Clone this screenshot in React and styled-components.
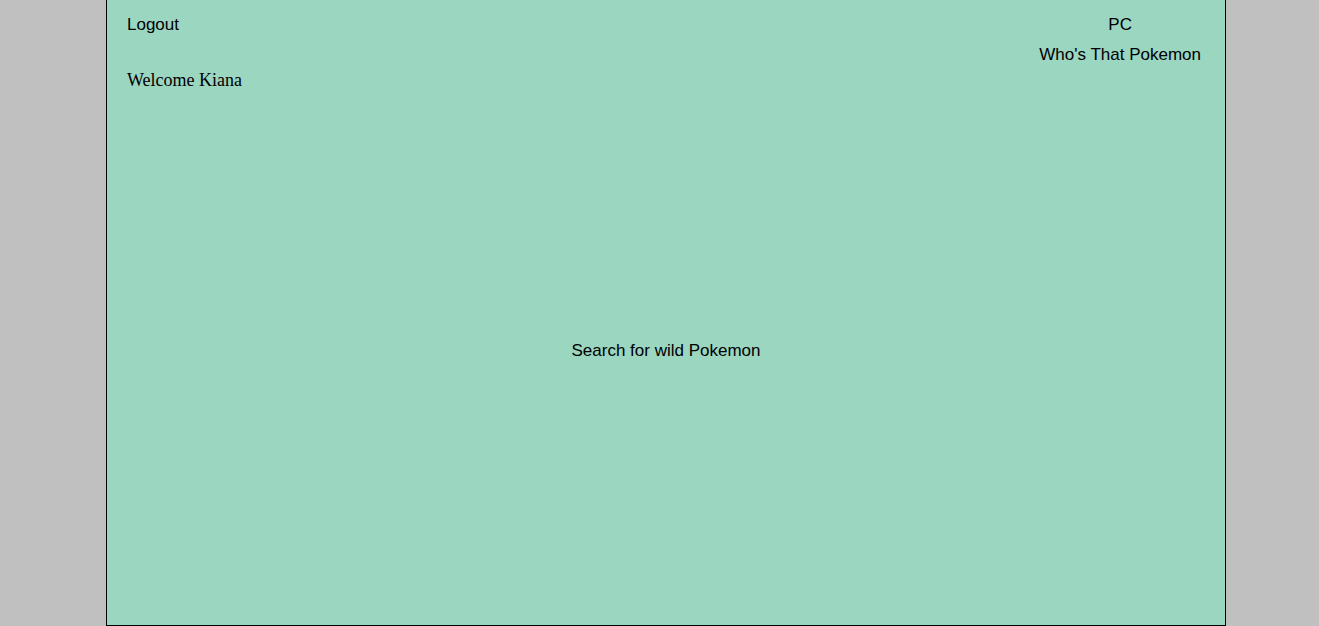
import React from "react";
import styled, { createGlobalStyle } from "styled-components";

const GlobalStyle = createGlobalStyle`
	html, body {
		margin: 0;
		padding: 0;
		background: #c0c0c0;
		overflow: hidden;
	}
`;

const Page = styled.div`
	width: 1319px;
	height: 626px;
	display: flex;
	justify-content: flex-start;
	padding-left: 106px;
	box-sizing: border-box;
`;

const Frame = styled.div`
	width: 1120px;
	height: 626px;
	box-sizing: border-box;
	background: #9bd6c1;
	border: 1px solid #000;
	border-top: none;
	display: flex;
	flex-direction: column;
`;

const Header = styled.div`
	display: flex;
	justify-content: space-between;
	align-items: flex-start;
	padding: 15px 24px 0 20px;
	height: 90px;
	box-sizing: border-box;
`;

const LeftCol = styled.div`
	display: flex;
	flex-direction: column;
	gap: 35px;
`;

const NavLink = styled.a`
	font-family: "Liberation Sans", Arial, sans-serif;
	font-size: 17px;
	line-height: 20px;
	color: #000;
	text-decoration: none;
	cursor: pointer;
`;

const Welcome = styled.p`
	margin: 0;
	font-family: "Liberation Serif", "Times New Roman", serif;
	font-size: 18px;
	line-height: 20px;
	color: #000;
`;

const RightCol = styled.div`
	display: flex;
	flex-direction: column;
	align-items: center;
	gap: 10px;
`;

const Main = styled.div`
	flex: 1;
	display: flex;
	justify-content: center;
	padding-top: 251px;
`;

const SearchLink = styled(NavLink)``;

export default function App() {
	return (
		<>
			<GlobalStyle />
			<Page>
				<Frame>
					<Header>
						<LeftCol>
							<NavLink>Logout</NavLink>
							<Welcome>Welcome Kiana</Welcome>
						</LeftCol>
						<RightCol>
							<NavLink>PC</NavLink>
							<NavLink>Who's That Pokemon</NavLink>
						</RightCol>
					</Header>
					<Main>
						<SearchLink>Search for wild Pokemon</SearchLink>
					</Main>
				</Frame>
			</Page>
		</>
	);
}
